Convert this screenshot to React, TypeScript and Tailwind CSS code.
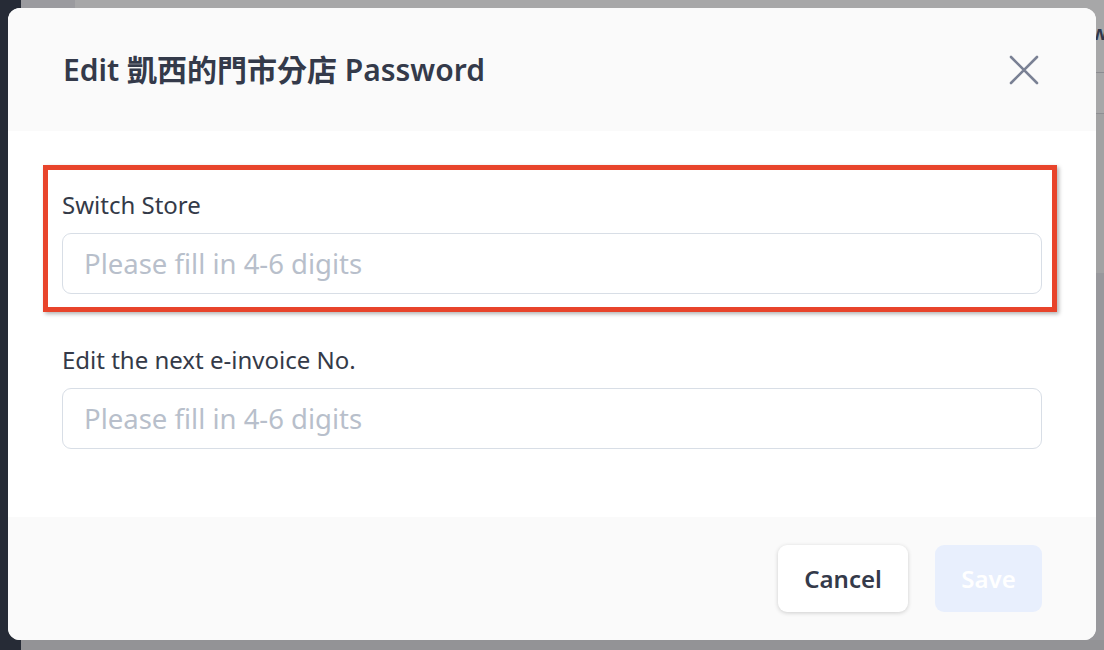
import React from "react";

const font = { fontFamily: '"Noto Sans", "Noto Sans CJK TC", sans-serif' };

function Field({ label }: { label: string }) {
  return (
    <div className="flex flex-col gap-[12px]">
      <label className="text-[24px] leading-[32px] text-[#343a48]">{label}</label>
      <input
        className="h-[61px] w-full rounded-[9px] border border-[#d8dee6] bg-white px-[21px] text-[27.5px] text-[#343a48] outline-none placeholder:text-[#b8bfcb]"
        placeholder="Please fill in 4-6 digits"
      />
    </div>
  );
}

export default function App() {
  return (
    <div className="relative flex h-[650px] w-[1104px] overflow-hidden bg-[#98989c]" style={font}>
      <div className="w-[21px] shrink-0 bg-[#262b36]" />
      <div className="flex flex-1 flex-col">
        <div className="flex h-[113px] bg-[#a7a7a8]">
          <div className="w-[54px] bg-[#9b9b9f]" />
          <div className="flex-1" />
        </div>
        <div className="h-[160px] border-t border-[#8e8e92] bg-[#a2a2a3]" />
        <div className="flex-1 bg-[#98989c]" />
        <div className="h-[10px] bg-[#939396]" />
      </div>
      <div className="absolute right-[-4px] top-[18px] text-[20px] font-bold text-[#30364a]">w</div>
      <div className="absolute right-0 top-[72px] h-[1px] w-[8px] bg-[#8b8b90]" />

      <div className="absolute left-[8px] top-[8px] flex h-[632px] w-[1088px] flex-col overflow-hidden rounded-[12px] bg-white">
        <div className="flex h-[123px] shrink-0 items-center justify-between bg-[#fafafa] pl-[55px] pr-[54px]">
          <h2 className="text-[30px] font-semibold text-[#343a4a]">Edit 凱西的門市分店 Password</h2>
          <svg width="30" height="30" viewBox="0 0 30 30" fill="none" className="mr-[3px]">
            <path d="M2 2 L28 28 M28 2 L2 28" stroke="#7a8194" strokeWidth="2.6" strokeLinecap="round" />
          </svg>
        </div>
        <div className="flex flex-1 flex-col gap-[50px] bg-white px-[54px] pt-[58px]">
          <Field label="Switch Store" />
          <Field label="Edit the next e-invoice No." />
        </div>
        <div className="flex h-[123px] shrink-0 items-center justify-end gap-[27px] bg-[#fafafa] px-[54px]">
          <button className="h-[67px] w-[130px] rounded-[9px] bg-white text-[24px] font-semibold text-[#343a4a] shadow-[0_1px_4px_rgba(0,0,0,0.18)]">
            Cancel
          </button>
          <button className="h-[67px] w-[107px] rounded-[9px] bg-[#e8effd] text-[24px] font-semibold text-white">
            Save
          </button>
        </div>
      </div>

      <div className="absolute left-[43px] top-[165px] h-[147px] w-[1014px] border-[5px] border-[#e8442b] shadow-[2px_2px_4px_rgba(0,0,0,0.3)]" />
    </div>
  );
}
